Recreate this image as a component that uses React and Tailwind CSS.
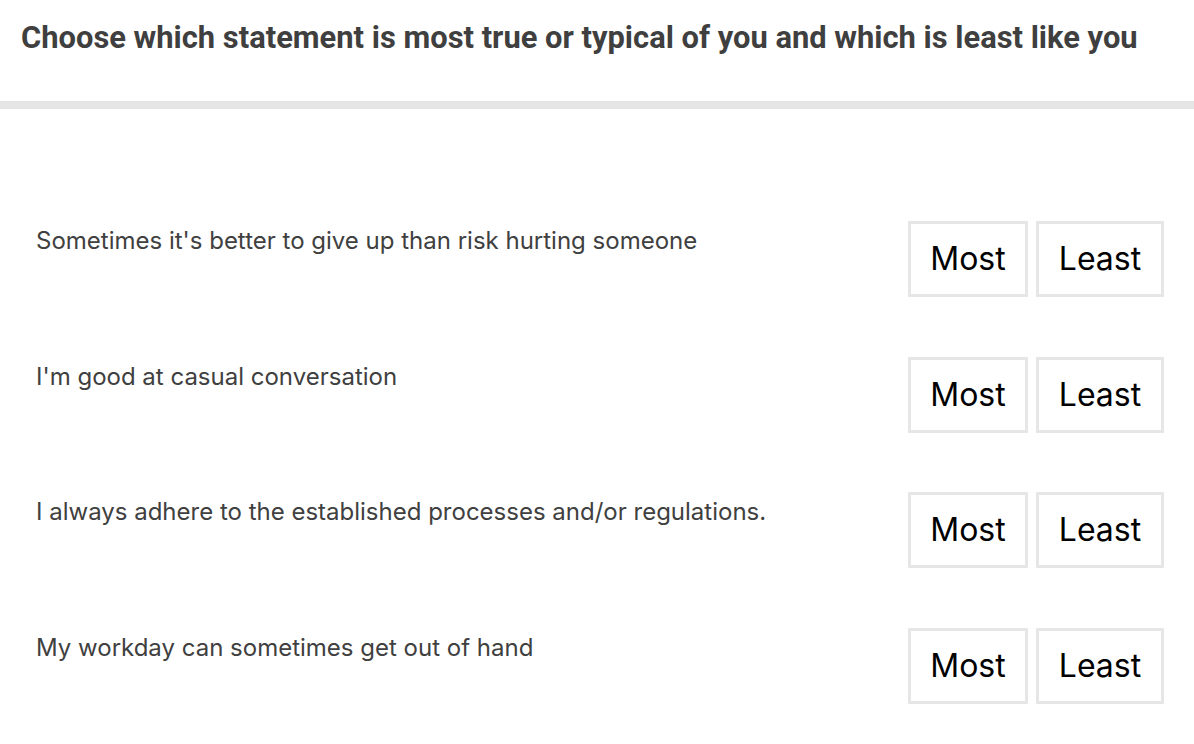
export default function App() {
  const items = [
    "Sometimes it's better to give up than risk hurting someone",
    "I'm good at casual conversation",
    "I always adhere to the established processes and/or regulations.",
    "My workday can sometimes get out of hand",
  ];
  return (
    <div className="w-[1194px] h-[744px] bg-white overflow-hidden">
      <div className="h-[109px] pl-[21px] pt-[19px] border-b-[8px] border-[#e5e5e5]">
        <h1 className="text-[30.9px] leading-[38px] font-bold text-[#3f3f3f]" style={{ fontFamily: "Roboto, sans-serif" }}>
          Choose which statement is most true or typical of you and which is least like you
        </h1>
      </div>
      <div className="pt-[112px] pl-[36px] pr-[30px] flex flex-col gap-[59.7px]" style={{ fontFamily: "Inter, sans-serif" }}>
        {items.map((t, i) => (
          <div key={i} className="flex justify-between items-start h-[76px]">
            <p className="text-[24px] leading-[32px] text-[#404040] pt-[4px]">{t}</p>
            <div className="flex gap-[8px]">
              <button className="w-[120px] h-[76px] border-[3px] border-[#e6e6e6] bg-white text-[32px] text-black">Most</button>
              <button className="w-[128px] h-[76px] border-[3px] border-[#e6e6e6] bg-white text-[32px] text-black">Least</button>
            </div>
          </div>
        ))}
      </div>
    </div>
  );
}
